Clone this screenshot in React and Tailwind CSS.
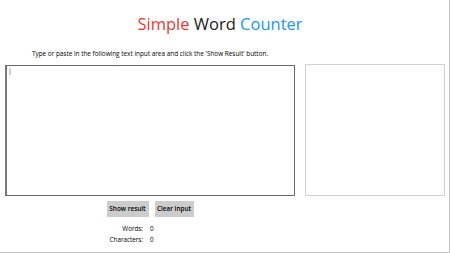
export default function App() {
  return (
    <div className="w-[450px] h-[253px] bg-white border-r border-b border-[#c4c4c4] font-['Open_Sans',sans-serif] text-black overflow-hidden">
      <h1 className="w-[440px] text-center text-[16.5px] leading-[24px] mt-[12px] font-normal">
        <span className="text-[#e53935]">Simple</span>{" "}
        <span className="text-[#1a1a1a]">Word</span>{" "}
        <span className="text-[#2196f3]">Counter</span>
      </h1>
      <div className="flex items-end gap-[10px] pl-[5px]">
        <div className="w-[290px] flex flex-col">
          <p className="text-center text-[6.4px] leading-[10px] mt-[13px] mb-[6px] text-black whitespace-nowrap">
            Type or paste in the following text input area and click the 'Show Result' button.
          </p>
          <div className="relative h-[131px] border border-[#6a6a6a] border-l-2 border-l-[#7a7a7a] bg-white">
            <div className="absolute left-[2px] top-[2px] w-[2px] h-[7px] bg-[#cfcfcf]" />
          </div>
        </div>
        <div className="w-[140px] h-[132px] border border-[#d2d2d2]" />
      </div>
      <div className="w-[290px] ml-[5px] flex flex-col">
        <div className="flex justify-center gap-[6px] mt-[5px]">
          <button className="h-[16px] w-[42px] bg-[#cccccc] text-[6.4px] font-semibold text-black leading-[16px] whitespace-nowrap">
            Show result
          </button>
          <button className="h-[16px] w-[39px] bg-[#cccccc] text-[6.4px] font-semibold text-black leading-[16px] whitespace-nowrap">
            Clear input
          </button>
        </div>
        <div className="grid grid-cols-[138px_1fr] gap-x-[7px] mt-[6px] text-[6.3px] leading-[11px] text-black">
          <span className="text-right">Words:</span>
          <span>0</span>
          <span className="text-right">Characters:</span>
          <span>0</span>
        </div>
      </div>
    </div>
  );
}
